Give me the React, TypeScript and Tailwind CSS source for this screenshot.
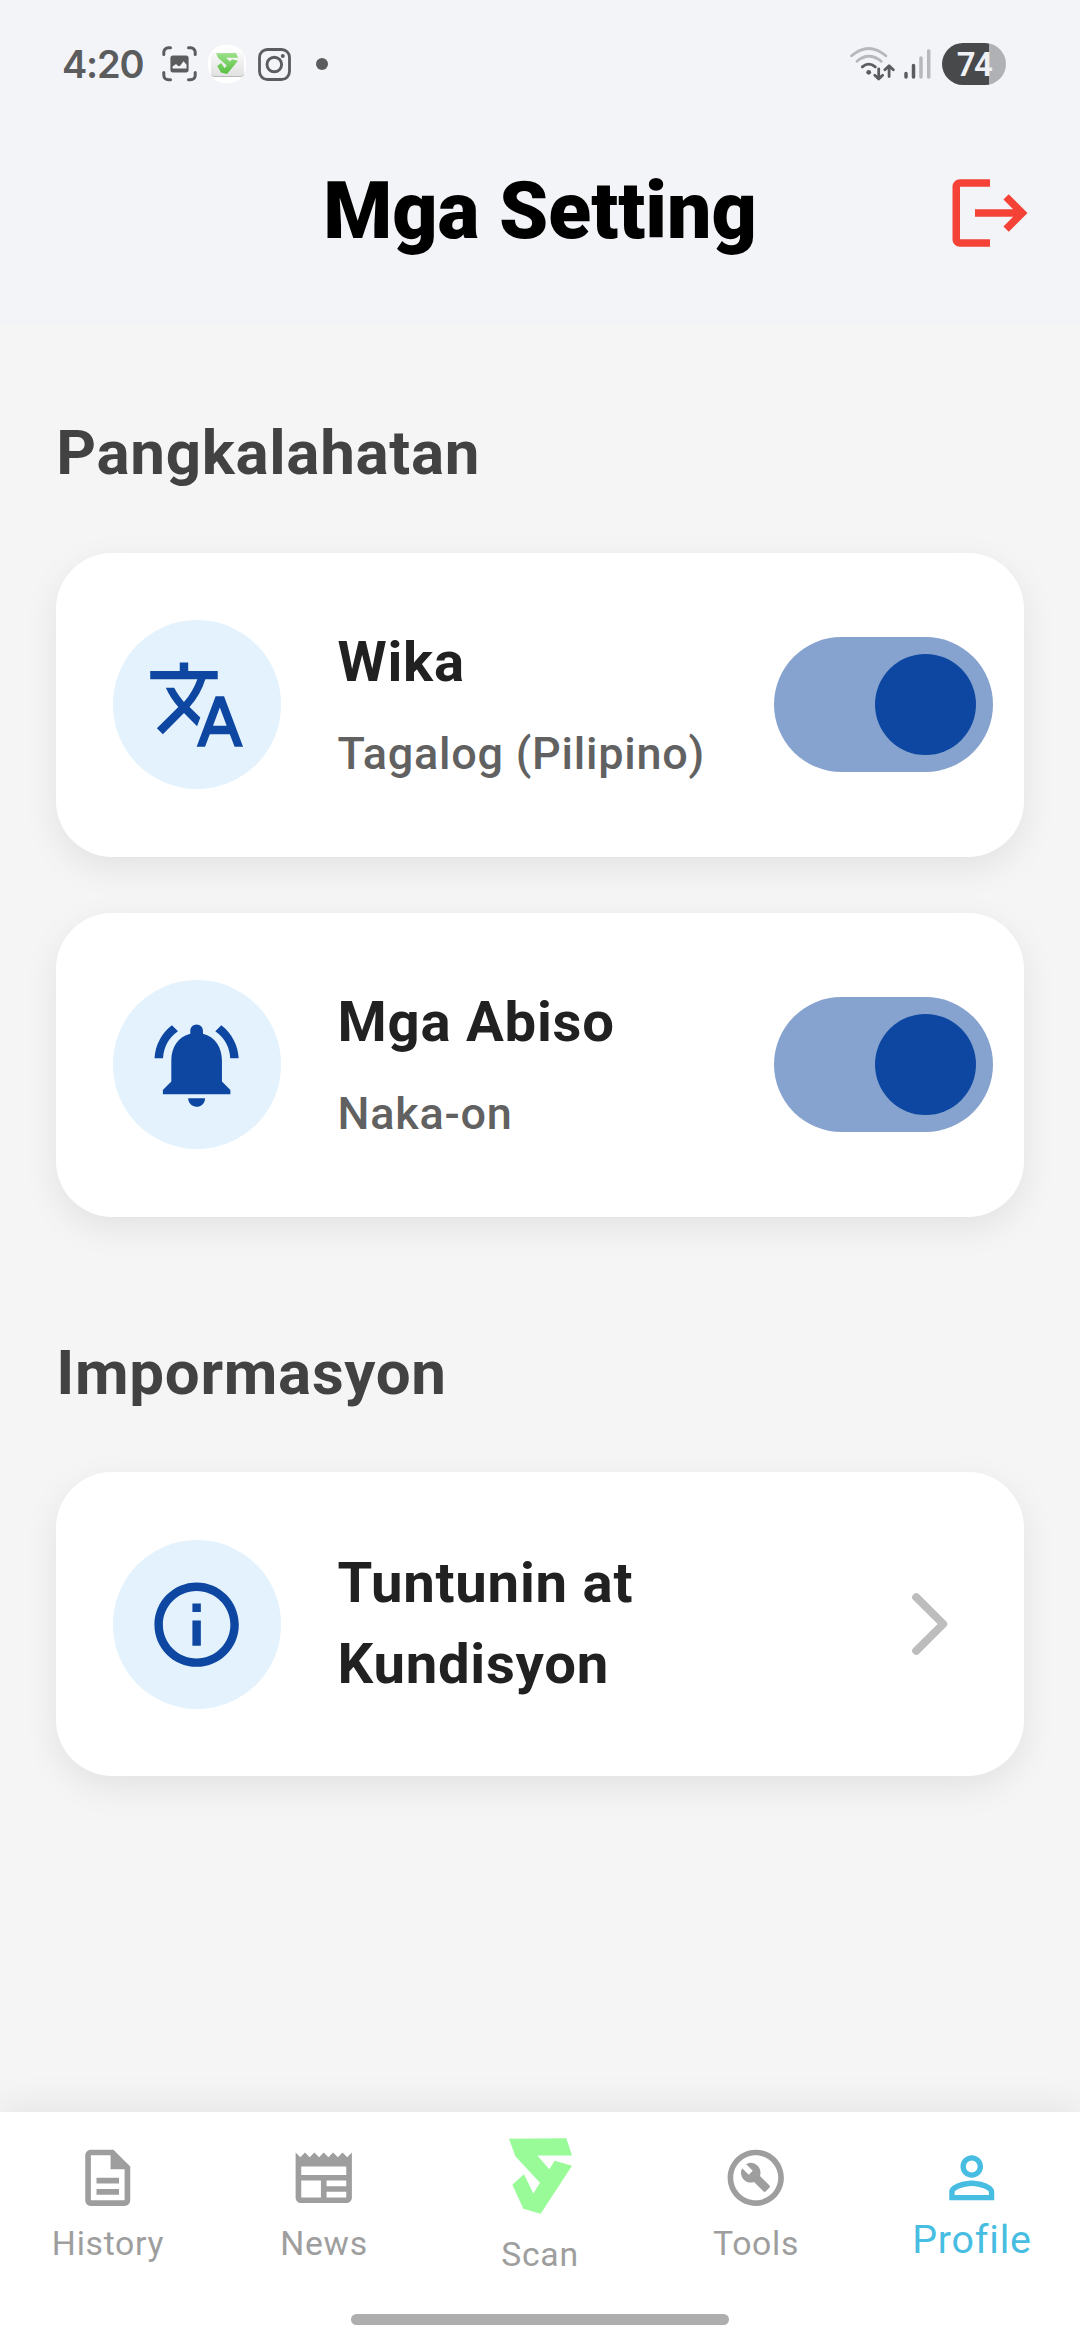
import { useState, type ReactNode } from 'react';
import {
  MdInfoOutline,
  MdLogout,
  MdNewspaper,
  MdNotificationsActive,
  MdOutlineBuildCircle,
  MdOutlineDescription,
  MdPersonOutline,
  MdTranslate,
} from 'react-icons/md';

const LOGO_POINTS =
  '58,40 230,38 247,90 143,90 179,131 195,106 247,121 153,265 101,250 68,178 103,146 131,204 151,172 77,92';

function StatusBar() {
  return (
    <div className="flex h-32 items-center justify-between pl-[62px] pr-[74px] text-[#5b5c5e]">
      <div className="flex items-center">
        <span className="w-[100px] font-[Inter] text-[38px] leading-[46px] font-semibold tracking-[-1.2px]">4:20</span>

        {/* Screenshot saved */}
        <svg width="35" height="36" viewBox="0 0 35 36" fill="none" stroke="currentColor" strokeWidth="3" strokeLinecap="round">
          <path d="M1.8 8.6V6.3a4.5 4.5 0 0 1 4.5-4.5h2.2M26.5 1.8h2.2a4.5 4.5 0 0 1 4.5 4.5v2.3M33.2 26.4v2.9a4.5 4.5 0 0 1-4.5 4.5h-2.2M8.5 33.8H6.3a4.5 4.5 0 0 1-4.5-4.5v-2.9" />
          <rect x="8.4" y="9.6" width="18.2" height="16.8" rx="2.6" fill="currentColor" stroke="none" />
          <path d="M10.6 22.4v-1.8l3.4-2.6 2.4 2.2 1.8-.4 3.3-4.6 3 3.6v3.6z" fill="#f3f4f8" stroke="none" />
        </svg>

        {/* App notification */}
        <span className="ml-[11px] flex h-[38px] w-[38px] items-center justify-center rounded-[17px] bg-white">
          <span className="flex h-[25px] w-[33px] items-center justify-center rounded-[4px] border-b border-[#b9b9b9] bg-linear-to-b from-[#fafafa] to-[#e2e2e2]">
            <svg width="22" height="21" viewBox="58 38 189 227" preserveAspectRatio="none">
              <defs>
                <linearGradient id="notifGreen" x1="0" y1="0" x2="0" y2="1">
                  <stop offset="0" stopColor="#9be08a" />
                  <stop offset="1" stopColor="#56bf3e" />
                </linearGradient>
              </defs>
              <polygon points={LOGO_POINTS} fill="url(#notifGreen)" />
            </svg>
          </span>
        </span>

        {/* Instagram */}
        <svg className="ml-3" width="33" height="33" viewBox="0 0 33 33" fill="none" stroke="currentColor">
          <rect x="1.5" y="1.5" width="30" height="30" rx="8" strokeWidth="2.8" />
          <circle cx="16.3" cy="16.5" r="7.3" strokeWidth="2.9" />
          <circle cx="24.8" cy="8" r="2" fill="currentColor" stroke="none" />
        </svg>
        <span className="ml-[25px] h-3 w-3 rounded-full bg-[#5b5c5e]" />
      </div>

      <div className="flex items-center">
        <svg width="46" height="36" viewBox="0 0 46 36" fill="none" strokeLinecap="round" strokeLinejoin="round" strokeWidth="2.8">
          <g stroke="#b7b8bc">
            <path d="M2.6 9.8Q19.7-4.8 36.8 9.8" />
            <path d="M8 15.3Q19.7 5.3 32.3 15.3" />
          </g>
          <g stroke="currentColor">
            <path d="M13.3 20.9Q19.7 15.3 26.3 20.9" />
            <path d="M29.7 22.8V33M25.8 29.2l3.9 3.8 3.9-3.8" />
            <path d="M40.1 30.6V19.8M35.9 23.8l4.2-4 4.2 4" />
          </g>
          <circle cx="19.7" cy="26.3" r="2.4" fill="currentColor" />
        </svg>
        <svg className="ml-2" width="29" height="34" viewBox="0 0 29 34" fill="none" strokeLinecap="round" strokeWidth="3.5">
          <path d="M3 26.5v3.6M10.5 18.6v11.5" stroke="currentColor" />
          <path d="M18 11v19.1M25.7 4v26.1" stroke="#b7b8bc" />
        </svg>
        <div className="ml-[10px] flex h-[42px] w-16 items-center justify-center rounded-full bg-linear-to-r from-[#48494b] from-[73.5%] to-[#b0b1b5] to-[73.5%]">
          <span className="pt-px font-[Roboto] text-[33px] leading-[42px] font-semibold tracking-[-1.5px] text-[#f0f1f5]">74</span>
        </div>
      </div>
    </div>
  );
}

function Header() {
  return (
    <header className="h-[325px] bg-[#f3f4f8]">
      <StatusBar />
      <div className="grid h-[169px] grid-cols-[1fr_auto_1fr] items-center">
        <h1 className="col-start-2 pb-[3px] text-[78.75px] leading-[92px] font-black text-black">Mga Setting</h1>
        <button className="mr-[45px] justify-self-end text-[#f44336]">
          <MdLogout size={90} />
        </button>
      </div>
    </header>
  );
}

function Toggle({ on, onToggle }: { on: boolean; onToggle: () => void }) {
  return (
    <button
      onClick={onToggle}
      className={`mr-[30.75px] flex h-[135px] w-[219.5px] shrink-0 items-center rounded-full px-[17px] ${
        on ? 'justify-end bg-[#86a3d0]' : 'justify-start bg-gray-300'
      }`}
    >
      <span className={`h-[101.25px] w-[101.25px] rounded-full ${on ? 'bg-[#0d47a1]' : 'bg-gray-500'}`} />
    </button>
  );
}

interface SettingCardProps {
  icon: ReactNode;
  title: string;
  subtitle?: string;
  trailing: ReactNode;
}

function SettingCard({ icon, title, subtitle, trailing }: SettingCardProps) {
  return (
    <div className="flex h-[303.75px] items-center rounded-[56px] bg-white pl-[56.25px] shadow-[0_11px_35px_rgba(0,0,0,0.08)]">
      <div className="flex h-[168.75px] w-[168.75px] shrink-0 items-center justify-center rounded-full bg-[#e3f2fd] text-[#0d47a1]">
        {icon}
      </div>
      <div className="ml-[56.25px] flex flex-1 flex-col gap-[19px] pb-px">
        <h3 className="max-w-[340px] text-[56.25px] leading-[80.5px] font-bold tracking-[0.75px] text-[#212121]">{title}</h3>
        {subtitle && (
          <p className="text-[45px] leading-16 font-medium tracking-[0.75px] whitespace-nowrap text-[#616161]">{subtitle}</p>
        )}
      </div>
      {trailing}
    </div>
  );
}

function SectionTitle({ children }: { children: ReactNode }) {
  return <h2 className="text-[61.875px] leading-[88px] font-bold tracking-[0.7px] text-[#424242]">{children}</h2>;
}

interface NavItemProps {
  icon: ReactNode;
  label: string;
}

function NavItem({ icon, label }: NavItemProps) {
  return (
    <button className="flex flex-1 flex-col items-center pt-[31.5px] text-[#9e9e9e]">
      {icon}
      <span className="mt-[13px] text-[33.75px] leading-10 tracking-[0.7px]">{label}</span>
    </button>
  );
}

export default function App() {
  const [tagalog, setTagalog] = useState(true);
  const [notifications, setNotifications] = useState(true);

  return (
    <div className="flex h-[2340px] w-[1080px] flex-col overflow-hidden bg-[#f5f5f5] font-[Roboto,sans-serif]">
      <Header />

      <main className="flex-1 px-[56.25px] pt-[84px]">
        <SectionTitle>Pangkalahatan</SectionTitle>
        <div className="mt-[55.75px] flex flex-col gap-[56.25px]">
          <SettingCard
            icon={<MdTranslate size={101.25} />}
            title="Wika"
            subtitle={tagalog ? 'Tagalog (Pilipino)' : 'English'}
            trailing={<Toggle on={tagalog} onToggle={() => setTagalog(!tagalog)} />}
          />
          <SettingCard
            icon={<MdNotificationsActive size={101.25} />}
            title="Mga Abiso"
            subtitle={notifications ? 'Naka-on' : 'Naka-off'}
            trailing={<Toggle on={notifications} onToggle={() => setNotifications(!notifications)} />}
          />
        </div>

        <div className="mt-[112px]">
          <SectionTitle>Impormasyon</SectionTitle>
          <div className="mt-[55.75px]">
            <SettingCard
              icon={<MdInfoOutline size={101.25} />}
              title="Tuntunin at Kundisyon"
              trailing={
                <svg className="mr-[76px] shrink-0" width="36" height="62" viewBox="0 0 36 62" fill="none">
                  <path d="M4.2 4.2 31.2 31 4.2 57.8" stroke="#bdbdbd" strokeWidth="8" strokeLinecap="round" strokeLinejoin="round" />
                </svg>
              }
            />
          </div>
        </div>
      </main>

      {/* Bottom navigation */}
      <nav className="relative flex h-[228px] bg-white shadow-[0_-6px_35px_rgba(0,0,0,0.07)]">
        <NavItem icon={<MdOutlineDescription size={67.5} />} label="History" />
        <NavItem icon={<MdNewspaper size={67.5} />} label="News" />
        <button className="flex flex-1 flex-col items-center pt-[25.5px] text-[#9e9e9e]">
          <svg width="63" height="76" viewBox="58 38 189 227">
            <polygon points={LOGO_POINTS} fill="#98fb98" />
          </svg>
          <span className="mt-[21px] text-[33.75px] leading-10 tracking-[0.7px]">Scan</span>
        </button>
        <NavItem icon={<MdOutlineBuildCircle size={67.5} />} label="Tools" />
        <button className="flex flex-1 flex-col items-center pt-[31.5px] text-[#46bde1]">
          <MdPersonOutline size={67.5} />
          <span className="mt-1.5 text-[39.375px] leading-[46px] tracking-[0.8px]">Profile</span>
        </button>

        {/* Gesture handle */}
        <div className="absolute bottom-[15px] left-1/2 h-[11px] w-[378px] -translate-x-1/2 rounded-full bg-[#aeaeae]" />
      </nav>
    </div>
  );
}
